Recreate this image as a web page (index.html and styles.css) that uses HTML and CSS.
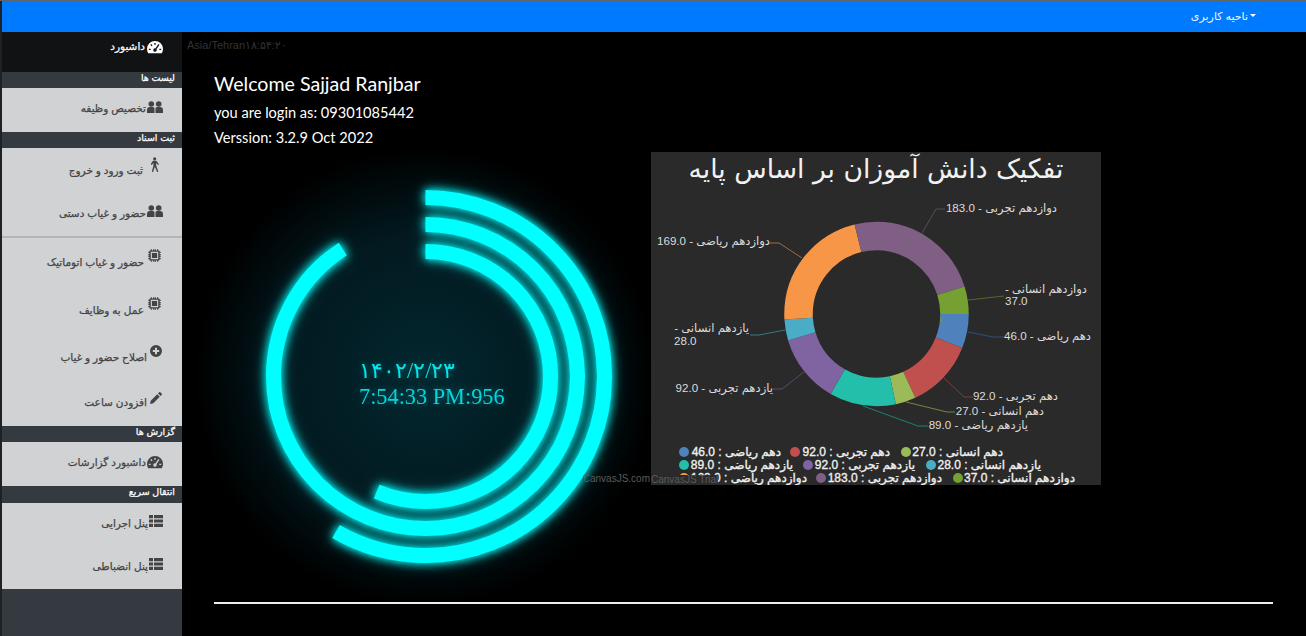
FILE: index.html
```html
<!DOCTYPE html>
<html lang="fa">
<head>
  <meta charset="utf-8" />
  <meta name="viewport" content="width=device-width, initial-scale=1" />
  <title>داشبورد</title>
  <link rel="stylesheet" href="styles.css">
</head>
<body>
  <svg class="icon-defs" aria-hidden="true">
    <symbol id="i-gauge" viewBox="0 0 16 14">
      <path fill-rule="evenodd" d="M8 1a8 8 0 0 0-8 8c0 1.600.4 3 1.200 4.300h13.600A8 8 0 0 0 16 9a8 8 0 0 0-8-8zM7.300 3h1.400v1.800H7.300zM3.300 4.800l1.100-.9 1.100 1.500-1.100.9zM1.800 8.700h1.900v1.300H1.800zM12.300 8.700h1.900v1.300h-1.900zM11.400 4l1.100.8-3 4.500a1.700 1.700 0 1 1-1.200-.9z"/>
    </symbol>
    <symbol id="i-users" viewBox="0 0 16 12">
      <circle cx="4.300" cy="3" r="2.800"/>
      <circle cx="11.700" cy="3" r="2.800"/>
      <path d="M0 12V9a3 3 0 0 1 3-3h2.600a3 3 0 0 1 1.900 1v5zM8.500 12V7a3 3 0 0 1 1.900-1H13a3 3 0 0 1 3 3v3z"/>
    </symbol>
    <symbol id="i-walk" viewBox="0 0 12 16">
      <circle cx="6.200" cy="1.800" r="1.700"/>
      <path d="M4.300 4h3.600l3 3.800-1 .8-2-2.200v3l2.300 6.400-1.300.5-2.500-5.800-2 5.800-1.300-.4 1.700-6.600V6.400L3 8.600l-1.200-.8z"/>
    </symbol>
    <symbol id="i-chip" viewBox="0 0 14 14">
      <path fill-rule="evenodd" d="M3 .3h1.200v1.200h1.300V.3h1.200v1.200h.6V.3h1.200v1.200h1.300V.3H11v1.200h.7a.8.8 0 0 1 .8.800V3h1.200v1.200h-1.200v1.300h1.200v1.200h-1.200v.6h1.200v1.200h-1.200v1.300h1.200V11h-1.200v.7a.8.8 0 0 1-.8.8H11v1.200H9.800v-1.200H8.500v1.200H7.300v-1.200h-.6v1.200H5.500v-1.200H4.200v1.200H3v-1.200h-.7a.8.8 0 0 1-.8-.8V11H.3V9.800h1.200V8.500H.3V7.300h1.200v-.6H.3V5.500h1.200V4.200H.3V3h1.200v-.7a.8.8 0 0 1 .8-.8H3zM3 3v8h8V3zM4.200 4.200h5.600v5.600H4.200z"/>
    </symbol>
    <symbol id="i-plus" viewBox="0 0 12 12">
      <path fill-rule="evenodd" d="M6 0a6 6 0 1 0 0 12A6 6 0 0 0 6 0zM5 2.800h2V5h2.200v2H7v2.200H5V7H2.800V5H5z"/>
    </symbol>
    <symbol id="i-pencil" viewBox="0 0 12 12">
      <path d="M0 12l.7-3.300 6.500-6.500 2.600 2.600-6.500 6.500zM8 1.400 9.200.2a.8.8 0 0 1 1.100 0l1.500 1.500a.8.8 0 0 1 0 1.100L10.600 4z"/>
    </symbol>
    <symbol id="i-list" viewBox="0 0 14 12">
      <path d="M0 0h4v3.200H0zM5 0h9v3.200H5zM0 4.400h4v3.200H0zM5 4.400h9v3.200H5zM0 8.800h4V12H0zM5 8.800h9V12H5z"/>
    </symbol>
  </svg>

  <nav class="topbar">
    <a class="user-menu" href="#">ناحیه کاربری</a>
  </nav>

  <div class="page">
    <aside class="sidebar">
      <a class="home-link" href="#"><svg class="ic ic-gauge"><use href="#i-gauge"/></svg>داشبورد</a>

      <div class="group-title">لیست ها</div>
      <a class="item" href="#"><svg class="ic ic-users"><use href="#i-users"/></svg>تخصیص وظیفه</a>

      <div class="group-title">ثبت اسناد</div>
      <a class="item item-mid" href="#"><svg class="ic ic-walk"><use href="#i-walk"/></svg>ثبت ورود و خروج</a>
      <a class="item item-line" href="#"><svg class="ic ic-users"><use href="#i-users"/></svg>حضور و غیاب دستی</a>
      <a class="item item-tall" href="#"><svg class="ic ic-chip"><use href="#i-chip"/></svg>حضور و غیاب اتوماتیک</a>
      <a class="item item-tall" href="#"><svg class="ic ic-chip"><use href="#i-chip"/></svg>عمل به وظایف</a>
      <a class="item item-mid" href="#"><svg class="ic ic-plus"><use href="#i-plus"/></svg>اصلاح حضور و غیاب</a>
      <a class="item item-mid" href="#"><svg class="ic ic-pencil"><use href="#i-pencil"/></svg>افزودن ساعت</a>

      <div class="group-title">گزارش ها</div>
      <a class="item" href="#"><svg class="ic ic-gauge"><use href="#i-gauge"/></svg>داشبورد گزارشات</a>

      <div class="group-title group-title-last">انتقال سریع</div>
      <a class="item item-low" href="#"><svg class="ic ic-list"><use href="#i-list"/></svg>پنل اجرایی</a>
      <a class="item item-low" href="#"><svg class="ic ic-list"><use href="#i-list"/></svg>پنل انضباطی</a>
    </aside>

    <main class="main">
      <div class="zone-clock">Asia/Tehran۱۸:۵۴:۲۰</div>

      <div class="content">
        <h1>Welcome Sajjad Ranjbar</h1>
        <p>you are login as: 09301085442</p>
        <p>Verssion: 3.2.9 Oct 2022</p>

        <div class="charts">
          <div class="clock">
            <svg width="450" height="450" viewBox="0 0 450 450">
              <g class="rings" fill="none" stroke="#0ff" stroke-width="15" transform="rotate(-90 225.500 224.500)">
                <circle cx="225.500" cy="224.500" r="179" pathLength="360" stroke-dasharray="210 150"/>
                <circle cx="225.500" cy="224.500" r="152" pathLength="360" stroke-dasharray="327 33"/>
                <circle cx="225.500" cy="224.500" r="125" pathLength="360" stroke-dasharray="203 157"/>
              </g>
              <text class="clock-date" x="159" y="226">۱۴۰۲/۲/۲۳</text>
              <text class="clock-time" x="159" y="252">7:54:33 PM:956</text>
            </svg>
            <span class="mark mark-site">CanvasJS.com</span>
          </div>

          <div class="pie-card">
            <svg width="450" height="333" viewBox="651 152 450 333">
              <text class="pie-title" x="876" y="178" text-anchor="middle">تفکیک دانش آموزان بر اساس پایه</text>

              <g fill="none" stroke-width="28.500" transform="translate(876.500 314)">
                <circle r="78" pathLength="763" stroke="#4f81bc" stroke-dasharray="46 717"/>
                <circle r="78" pathLength="763" stroke="#c0504e" stroke-dasharray="92 671" stroke-dashoffset="-46"/>
                <circle r="78" pathLength="763" stroke="#9bbb58" stroke-dasharray="27 736" stroke-dashoffset="-138"/>
                <circle r="78" pathLength="763" stroke="#23bfaa" stroke-dasharray="89 674" stroke-dashoffset="-165"/>
                <circle r="78" pathLength="763" stroke="#8064a1" stroke-dasharray="92 671" stroke-dashoffset="-254"/>
                <circle r="78" pathLength="763" stroke="#4aacc5" stroke-dasharray="28 735" stroke-dashoffset="-346"/>
                <circle r="78" pathLength="763" stroke="#f79647" stroke-dasharray="169 594" stroke-dashoffset="-374"/>
                <circle r="78" pathLength="763" stroke="#7f6084" stroke-dasharray="183 580" stroke-dashoffset="-543"/>
                <circle r="78" pathLength="763" stroke="#77a033" stroke-dasharray="37 726" stroke-dashoffset="-726"/>
              </g>

              <g fill="none" stroke-width="1">
                <path stroke="#31506f" d="M968 332 993 337H1004"/>
                <path stroke="#7c3f3d" d="M944 378 964 397H973"/>
                <path stroke="#79843f" d="M906 402 947 412H955"/>
                <path stroke="#1c8174" d="M863 406 918 426H928"/>
                <path stroke="#584a6f" d="M804 372 782 389H773"/>
                <path stroke="#3a7687" d="M785 330 759 335H750"/>
                <path stroke="#a56a39" d="M802 258 779 243H770"/>
                <path stroke="#594a5c" d="M922 233 936 209H945"/>
                <path stroke="#506b28" d="M968 300 1004 296"/>
              </g>

              <g class="pie-labels">
                <text x="1091" y="340">دهم ریاضی - 46.0</text>
                <text x="1058" y="400">دهم تجربی - 92.0</text>
                <text x="1044" y="415">دهم انسانی - 27.0</text>
                <text x="1028" y="429">یازدهم ریاضی - 89.0</text>
                <text x="773" y="392">یازدهم تجربی - 92.0</text>
                <text x="749" y="332">یازدهم انسانی -</text>
                <text class="pie-value" x="674" y="345">28.0</text>
                <text x="770" y="245">دوازدهم ریاضی - 169.0</text>
                <text x="1057" y="212">دوازدهم تجربی - 183.0</text>
                <text x="1087" y="293">دوازدهم انسانی -</text>
                <text class="pie-value" x="1005" y="305">37.0</text>
              </g>

              <g>
                <circle cx="684" cy="452" r="5" fill="#4f81bc"/>
                <circle cx="795" cy="452" r="5" fill="#c0504e"/>
                <circle cx="906" cy="452" r="5" fill="#9bbb58"/>
                <circle cx="684" cy="465" r="5" fill="#23bfaa"/>
                <circle cx="808" cy="465" r="5" fill="#8064a1"/>
                <circle cx="931" cy="465" r="5" fill="#4aacc5"/>
                <circle cx="684" cy="478" r="5" fill="#f79647"/>
                <circle cx="821" cy="478" r="5" fill="#7f6084"/>
                <circle cx="958" cy="478" r="5" fill="#77a033"/>
              </g>
              <g class="pie-legend">
                <text x="781" y="456">دهم ریاضی : 46.0</text>
                <text x="890" y="456">دهم تجربی : 92.0</text>
                <text x="1003" y="456">دهم انسانی : 27.0</text>
                <text x="793" y="469">یازدهم ریاضی : 89.0</text>
                <text x="915" y="469">یازدهم تجربی : 92.0</text>
                <text x="1041" y="469">یازدهم انسانی : 28.0</text>
                <text x="807" y="482">دوازدهم ریاضی : 169.0</text>
                <text x="942" y="482">دوازدهم تجربی : 183.0</text>
                <text x="1075" y="482">دوازدهم انسانی : 37.0</text>
              </g>
            </svg>
            <span class="mark mark-trial">CanvasJS Trial</span>
          </div>
        </div>

        <hr class="rule">
      </div>
    </main>
  </div>
</body>
</html>
```

FILE: styles.css
```css
html, body {
  height: 100%;
}
body {
  margin: 0;
  padding: 1px 0 0 2px;
  box-sizing: border-box;
  background: #1d2224;
  font-family: "Liberation Sans", "DejaVu Sans", sans-serif;
  color: #fff;
  overflow: hidden;
  display: flex;
  flex-direction: column;
  box-shadow: inset 0 1px 0 #5f6468;
}
a {
  text-decoration: none;
}
.icon-defs {
  position: absolute;
  width: 0;
  height: 0;
}

/* top bar */
.topbar {
  height: 31px;
  flex: none;
  background: #007bff;
  display: flex;
  justify-content: flex-end;
  align-items: center;
  padding-right: 50px;
}
.user-menu {
  color: #f1f6ff;
  font-size: 11px;
}
.user-menu::after {
  content: "";
  display: inline-block;
  vertical-align: 3px;
  margin-left: 2px;
  border-top: 3px solid #fff;
  border-left: 3px solid transparent;
  border-right: 3px solid transparent;
}

.page {
  flex: 1;
  display: flex;
  min-height: 0;
}

/* sidebar */
.sidebar {
  width: 180px;
  flex: none;
  background: #343a40;
  direction: rtl;
  font-size: 10.500px;
  -webkit-text-stroke: 0.25px currentColor;
}
.home-link {
  display: flex;
  align-items: flex-start;
  gap: 2px;
  height: 40px;
  box-sizing: border-box;
  padding: 8px 19px 0 0;
  background: #111214;
  color: #fff;
}
.group-title {
  height: 16px;
  padding: 0 7px;
  font-size: 9.500px;
  line-height: 11px;
  color: #fff;
}
.group-title-last {
  height: 17px;
}
.item {
  display: flex;
  align-items: center;
  gap: 1px;
  height: 44px;
  box-sizing: border-box;
  padding: 0 19px 4px 0;
  background: #d1d2d4;
  color: #444;
}
.item-mid {
  height: 45.500px;
  padding-bottom: 2px;
}
.item-low {
  height: 43px;
}
.item-line {
  height: 44.500px;
  border-bottom: 2px solid #b4b5b7;
}
.item-tall {
  height: 48.500px;
  padding-bottom: 1px;
}
.ic {
  flex: none;
  fill: currentColor;
}
.ic-gauge {
  width: 16px;
  height: 14px;
}
.ic-users {
  width: 16px;
  height: 12px;
  margin-top: -3px;
}
.ic-walk {
  width: 11px;
  height: 15px;
  margin: -10px 3px 0 5px;
}
.ic-chip {
  width: 13px;
  height: 13px;
  margin: -13px 2px 0 3px;
}
.ic-plus {
  width: 12px;
  height: 12px;
  margin: -11px 1px 0 2px;
}
.ic-pencil {
  width: 12px;
  height: 12px;
  margin: -9px 1px 0 2px;
}
.ic-list {
  width: 14px;
  height: 12px;
  margin-top: -3px;
}

/* main */
.main {
  flex: 1;
  background: #000;
  position: relative;
  min-width: 0;
}
.zone-clock {
  padding: 7px 0 0 5px;
  font-size: 11px;
  line-height: 12px;
  color: #333;
}
.content {
  padding: 21px 33px 0 32px;
}
h1 {
  margin: 0 0 6px;
  font-family: Lato, sans-serif;
  font-size: 19.600px;
  line-height: 24px;
  font-weight: normal;
}
.content p {
  margin: 0 0 4px;
  font-family: Lato, sans-serif;
  font-size: 14.600px;
  line-height: 21px;
}
.charts {
  display: flex;
  gap: 1px;
  margin-left: -14px;
  margin-top: 3px;
}
.clock {
  position: relative;
  width: 450px;
  height: 450px;
  flex: none;
  background: radial-gradient(circle, #03272f 0%, #02191f 45%, #000 72%);
}
.clock svg {
  display: block;
}
.rings {
  filter: drop-shadow(0 0 4px #0ff) drop-shadow(0 0 6px rgba(0, 255, 255, 0.5));
}
.clock-date, .clock-time {
  font-family: "Liberation Serif", "DejaVu Serif", serif;
  filter: drop-shadow(0 0 3px rgba(0, 255, 255, 0.35));
}
.clock-date {
  font-size: 22.400px;
  fill: #08e4ea;
}
.clock-time {
  font-size: 22.300px;
  fill: #07d4dc;
}
.mark {
  position: absolute;
  font-size: 10px;
  line-height: 10px;
  color: #5b5b5b;
  white-space: nowrap;
}
.mark-site {
  right: 0;
  top: 322px;
}
.pie-card {
  position: relative;
  width: 450px;
  height: 333px;
  flex: none;
  background: #2a2a2a;
}
.pie-card svg {
  display: block;
}
.mark-trial {
  left: 0;
  bottom: 0;
  background: #2a2a2a;
}
.pie-title {
  font-family: "DejaVu Sans", sans-serif;
  font-size: 26.600px;
  fill: #f2f2f2;
  direction: rtl;
}
.pie-labels text {
  font-size: 11.600px;
  fill: #dcdcdc;
  direction: rtl;
}
.pie-labels .pie-value {
  direction: ltr;
}
.pie-legend text {
  font-size: 12px;
  fill: #f0f0f0;
  stroke: #f0f0f0;
  stroke-width: 0.35px;
  direction: rtl;
}
.rule {
  margin: 0;
  border: 0;
  border-top: 2px solid #eee;
}
```
